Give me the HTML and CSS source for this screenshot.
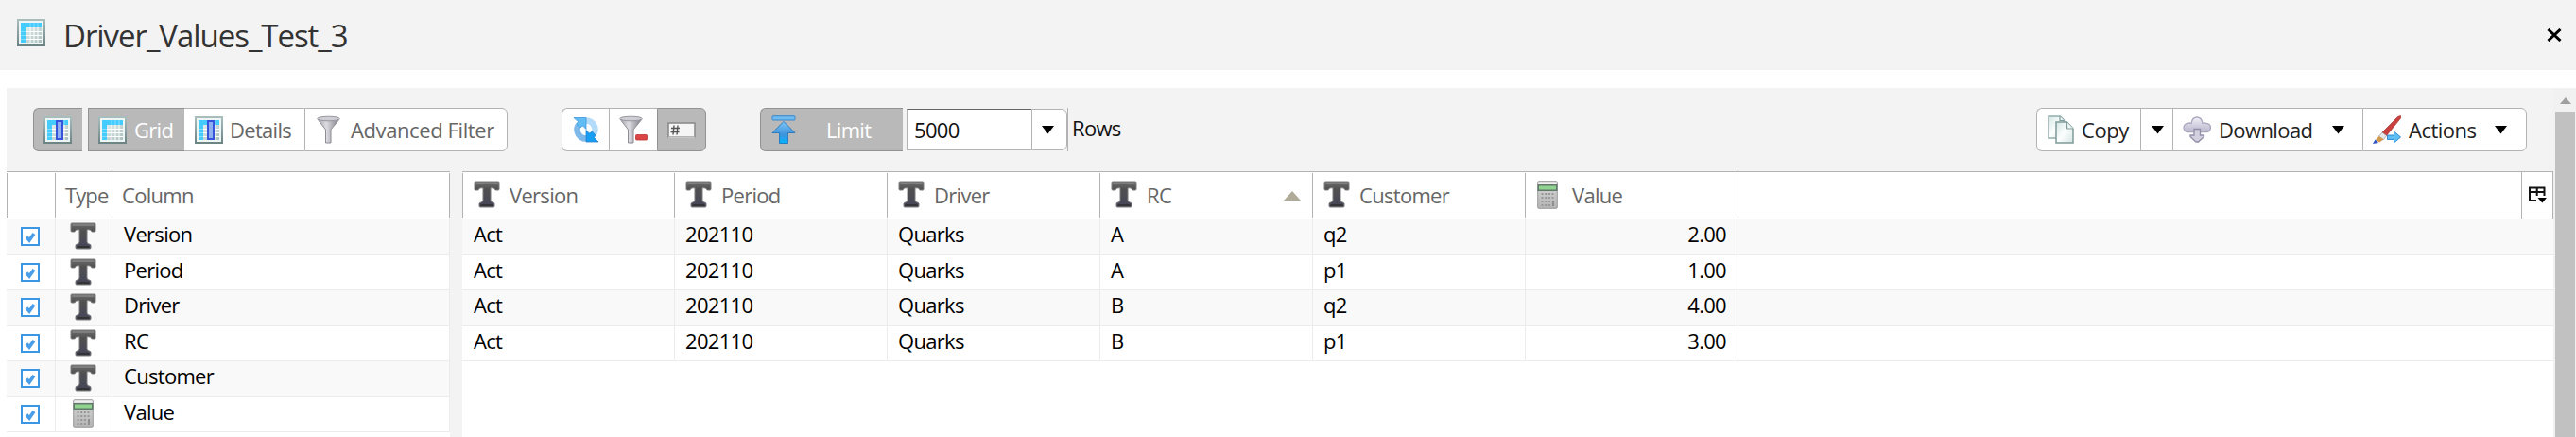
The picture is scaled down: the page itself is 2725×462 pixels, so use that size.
FILE: index.html
```html
<!DOCTYPE html>
<html lang="en">
<head>
<meta charset="utf-8">
<title>Driver_Values_Test_3</title>
<link rel="stylesheet" href="styles.css">
</head>
<body>
<svg class="defs" width="0" height="0">
  <defs>
    <linearGradient id="frame" x1="0" y1="0" x2="0" y2="1"><stop offset="0" stop-color="#a9bdbd"/><stop offset="1" stop-color="#6d8484"/></linearGradient>
    <linearGradient id="cells" x1="0" y1="0" x2="1" y2="1"><stop offset="0" stop-color="#f4fafa"/><stop offset="1" stop-color="#a9bfbe"/></linearGradient>
    <linearGradient id="tdark" x1="0" y1="0" x2="0" y2="1"><stop offset="0" stop-color="#6e6e6e"/><stop offset=".3" stop-color="#505050"/><stop offset="1" stop-color="#45455a"/></linearGradient>
    <linearGradient id="metal" x1="0" y1="0" x2="1" y2="0"><stop offset="0" stop-color="#a5a3a8"/><stop offset=".4" stop-color="#dddce3"/><stop offset="1" stop-color="#7c7a82"/></linearGradient>
    <linearGradient id="blue" x1="0" y1="0" x2="0" y2="1"><stop offset="0" stop-color="#7cc6f6"/><stop offset=".6" stop-color="#3f93dc"/><stop offset="1" stop-color="#00b4ff"/></linearGradient>
    <linearGradient id="paper" x1="0" y1="0" x2="1" y2="1"><stop offset="0" stop-color="#d3e6e4"/><stop offset=".5" stop-color="#fbfefe"/><stop offset="1" stop-color="#d5e5e3"/></linearGradient>
    <linearGradient id="cloud" x1="0" y1="0" x2="0" y2="1"><stop offset="0" stop-color="#f1f0f8"/><stop offset="1" stop-color="#b9b6cc"/></linearGradient>
    <linearGradient id="calc" x1="0" y1="0" x2="0" y2="1"><stop offset="0" stop-color="#d9d9d9"/><stop offset="1" stop-color="#b4b4b4"/></linearGradient>
    <symbol id="i-grid" viewBox="0 0 30 29">
      <rect x="1" y="1" width="28" height="27" fill="#eef6f5" stroke="url(#frame)" stroke-width="2"/>
      <rect x="4" y="4" width="22" height="21" fill="url(#cells)"/>
      <path d="M4 4h22v5H9v16H4z" fill="#45ccff"/>
      <path d="M9 13.500h17M9 17.500h17M9 21.500h17M14 9v16M18 9v16M22 9v16" stroke="#fff" stroke-width="1"/>
      <path d="M4 13.500h5M4 17.500h5M4 21.500h5M14 4v5M18 4v5M22 4v5" stroke="#8adfff" stroke-width=".9"/>
    </symbol>
    <symbol id="i-col" viewBox="0 0 30 29">
      <use href="#i-grid" width="30" height="29"/>
      <rect x="14" y="5" width="6" height="19" fill="#8fb0f0" stroke="#3653dd" stroke-width="2"/>
    </symbol>
    <symbol id="i-text" viewBox="0 0 28 29">
      <path d="M2 1h24q1 0 1 1v7q0 1-1 1h-2.500q-1 0-1-1-.5-1.500-4.500-1.300v13.300q.3 2 3 2.300 1 .2 1 1.200v2.500q0 1-1 1H7q-1 0-1-1v-2.500q0-1 1-1.200 2.700-.3 3-2.300V7.700Q6 7.500 5.500 9q0 1-1 1H2q-1 0-1-1V2q0-1 1-1z" fill="url(#tdark)" stroke="#7d7d7d" stroke-width="1"/>
      <path d="M2.500 3h23" stroke="#868686" stroke-width="1.500"/>
      <path d="M7.500 26h13" stroke="#333" stroke-width="2"/>
    </symbol>
    <symbol id="i-calc" viewBox="0 0 22 30">
      <rect x=".7" y=".7" width="20.600" height="28.600" rx="1" fill="url(#calc)" stroke="#9b9b9b"/>
      <path d="M1.500 1.500h19v2h-19z" fill="#f0f0f0"/>
      <rect x=".5" y="4" width="21" height="7" fill="#62786a"/>
      <rect x="2" y="5.500" width="18" height="4" fill="#8fd48e"/>
      <path d="M4.500 14h13M4.500 18h13M4.500 22h11M4.500 26h11" stroke="#979797" stroke-width="1.800" stroke-dasharray="2 1.700"/>
      <path d="M17 21v6" stroke="#8a8a8a" stroke-width="1.800"/>
    </symbol>
    <symbol id="i-funnel" viewBox="0 0 25 30">
      <path d="M1 4L9.500 15v14h5.500V15L24 4z" fill="url(#metal)" stroke="#8f8c94"/>
      <ellipse cx="12.500" cy="3.500" rx="11.800" ry="2.300" fill="#cfced5" stroke="#99969e"/>
    </symbol>
    <symbol id="i-down" viewBox="0 0 13 9"><path d="M0 0h13L6.500 8.500z"/></symbol>
  </defs>
</svg>

<header class="titlebar">
  <svg class="ic-grid"><use href="#i-grid"/></svg>
  <h1 class="title">Driver_Values_Test_3</h1>
  <svg class="close" viewBox="0 0 16 14"><path d="M1.500 1L14.500 13M14.500 1L1.500 13" stroke="#000" stroke-width="3"/></svg>
</header>

<main class="panel">
  <div class="work">
    <div class="toolbar">
      <div class="btn on b-cols"><svg class="ic-grid"><use href="#i-col"/></svg></div>
      <div class="group g-view">
        <div class="btn on b-grid"><svg class="ic-grid"><use href="#i-grid"/></svg><span class="t-grid">Grid</span></div>
        <div class="btn b-details"><svg class="ic-grid"><use href="#i-col"/></svg><span class="t-details">Details</span></div>
        <div class="btn b-filter"><svg class="ic-funnel"><use href="#i-funnel"/></svg><span class="t-filter">Advanced Filter</span></div>
      </div>
      <div class="group g-data">
        <div class="btn b-refresh"><svg class="ic-refresh" viewBox="0 0 28 28">
          <path d="M14 4.500A9.500 9.500 0 0 1 22 19" fill="none" stroke="#b4dbf7" stroke-width="6.500"/>
          <path d="M14 23.500A9.500 9.500 0 0 1 6 9" fill="none" stroke="#7db8ea" stroke-width="6.500"/>
          <path d="M1 1.500h13v12l-3.500-3.500-3 2-3.500-4 1.500-2.500z" fill="#62bdf4" stroke="#3d96db" stroke-width=".8"/>
          <path d="M27 27H14V14.500l3.500 3.500 3-2 3.500 4-1.500 2.500z" fill="#169ff2" stroke="#2b80cc" stroke-width=".8"/>
        </svg></div>
        <div class="btn b-clear"><svg class="ic-clear" viewBox="0 0 30 30">
          <use href="#i-funnel" width="25" height="30"/><rect x="17.500" y="20.500" width="12" height="5.500" rx="1" fill="#dc4545" stroke="#b93434" stroke-width=".8"/>
        </svg></div>
        <div class="btn on b-num"><svg class="ic-num" viewBox="0 0 30 17">
          <rect x="1" y="1" width="28" height="15" fill="#f5f5f5" stroke="#8c8c8c" stroke-width="1.600"/><path d="M1 16.200h28" stroke="#ddd"/>
          <path d="M4 6.500h9M3.500 10.500h9M7 3.500l-1 10M11 3.500l-1 10" stroke="#555" stroke-width="1.400"/>
        </svg></div>
      </div>
      <div class="btn on b-limit"><svg class="ic-limit" viewBox="0 0 26 30">
        <rect x="1" y=".7" width="24" height="4.300" rx=".8" fill="#6ebcf2" stroke="#3a87c8" stroke-width="1"/>
        <path d="M13 6.500L25 18.500H17.500V29.500H8.500V18.500H1z" fill="url(#blue)" stroke="#2c7cc0" stroke-width="1"/>
      </svg><span class="t-limit">Limit</span></div>
      <div class="combo"><div class="field"><span class="t-num">5000</span></div><div class="drop"><svg class="ic-down"><use href="#i-down"/></svg></div></div>
      <span class="rows-label">Rows</span>
      <div class="group g-right">
        <div class="btn dark b-copy"><svg class="ic-copy" viewBox="0 0 28 30">
          <path d="M1 1h12.500l4 4v19H1z" fill="url(#paper)" stroke="#93aeac" stroke-width="1.500"/>
          <path d="M9 7h11.500l6.500 7v15H9z" fill="url(#paper)" stroke="#7f9b99" stroke-width="1.500"/>
          <path d="M13 1v4.500h4.500M20.500 7v7H27" fill="#eaf5f4" stroke="#7f9b99" stroke-width="1.200"/>
        </svg><span class="t-copy">Copy</span></div>
        <div class="btn dark b-copydrop"><svg class="ic-down"><use href="#i-down"/></svg></div>
        <div class="btn dark b-download"><svg class="ic-cloud" viewBox="0 0 30 28">
          <path d="M5.500 16.500a4.500 4.500 0 0 1 0-9Q7.500 6.500 9 7.500 10 1 15 1T21 7.500q2-1.200 4 0a4.500 4.500 0 0 1 0 9z" fill="url(#cloud)" stroke="#aaa7bd" stroke-width="1.300"/>
          <path d="M12 13.500h6.500v6.500h4v1.500L16.500 27h-2.500L8 21.500V20h4z" fill="#d3d1e0" stroke="#908da6" stroke-width="1.300"/>
        </svg><span class="t-download">Download</span><svg class="ic-down"><use href="#i-down"/></svg></div>
        <div class="btn dark b-actions"><svg class="ic-brush" viewBox="0 0 30 30">
          <path d="M29.500.5V3L14.500 21.500l-4.500-3.500L26.500 1.500z" fill="#c9403e" stroke="#a8302e" stroke-width=".7"/>
          <path d="M10 18l4.500 3.500-3 4-5-3.500z" fill="#e9e9e9" stroke="#888" stroke-width=".6"/>
          <path d="M6.500 22l5 3.500-4.500 3-4-2.500z" fill="#d39a4b"/><path d="M2.500 25.500l3.500 3.500-6 1z" fill="#2c50c8"/>
          <path d="M15.500 21h7v-4L29.500 23l-7 6v-3.500h-7z" fill="#5dbdf5" stroke="#2b83c8" stroke-width=".9"/>
        </svg><span class="t-actions">Actions</span><svg class="ic-down"><use href="#i-down"/></svg></div>
      </div>
    </div>

    <div class="grids">
      <section class="columns-grid">
        <div class="head">
          <div class="hc c-check"></div><div class="hc c-type"><span class="t-type">Type</span></div><div class="hc c-name"><span class="t-column">Column</span></div>
        </div>
        <div id="columns"></div>
      </section>
      <section class="data-grid">
        <div class="head" id="data-head"></div>
        <div id="data"></div>
      </section>
    </div>
  </div>
  <div class="scrollbar"><svg class="up" viewBox="0 0 12 7"><path d="M0 7L6 0l6 7z" fill="#a0a0a0"/></svg><div class="thumb"></div></div>
</main>
<script src="grid.js"></script>
</body>
</html>
```
FILE: grid.js
```js
const cols = ['Version', 'Period', 'Driver', 'RC', 'Customer', 'Value'];
const rows = [
  ['Act', '202110', 'Quarks', 'A', 'q2', '2.00'],
  ['Act', '202110', 'Quarks', 'A', 'p1', '1.00'],
  ['Act', '202110', 'Quarks', 'B', 'q2', '4.00'],
  ['Act', '202110', 'Quarks', 'B', 'p1', '3.00']
];
const icon = c => c === 'Value'
  ? '<svg class="ic-calc"><use href="#i-calc"/></svg>'
  : '<svg class="ic-text"><use href="#i-text"/></svg>';
const check = '<svg class="check" viewBox="0 0 20 20"><rect x="1" y="1" width="18" height="18" fill="#fff" stroke="#3b97e3" stroke-width="2"/><path d="M6 10.500l3 3.500 5-7" fill="none" stroke="#4a9de8" stroke-width="3.600"/></svg>';

document.getElementById('columns').innerHTML = cols.map(c =>
  `<div class="row"><div class="cell c-check">${check}</div><div class="cell c-type">${icon(c)}</div><div class="cell c-name"><span class="txt">${c}</span></div></div>`).join('');

document.getElementById('data-head').innerHTML = cols.map(c =>
  `<div class="hc c-data"><span class="slot">${icon(c)}</span><span class="h-txt">${c}</span>${c === 'RC' ? '<svg class="sort" viewBox="0 0 18 10"><path d="M0 10L9 0l9 10z" fill="#b0ab98"/></svg>' : ''}</div>`).join('') +
  '<div class="hc c-rest"></div><div class="hc c-pick"><svg class="pick" viewBox="0 0 19 18"><path d="M8 15H1V1.500H16.500V10M1 6H16.500M8.700 1.500V10" fill="none" stroke="#111" stroke-width="2"/><path d="M9.500 12h9.500l-4.700 5.500z"/></svg></div>';

document.getElementById('data').innerHTML = rows.map(r =>
  '<div class="row">' + r.map((v, i) => `<div class="cell c-data${i === 5 ? ' num' : ''}"><span class="txt">${v}</span></div>`).join('') + '<div class="cell c-rest"></div></div>').join('');
```
FILE: styles.css
```css
* { box-sizing: border-box; }
body { margin: 0; height: 462px; overflow: hidden; background: #fff; font: 22px/30px "Open Sans", "Noto Sans", sans-serif; letter-spacing: -0.7px; color: #111; white-space: nowrap; }
svg { display: block; flex: none; }
.defs { position: absolute; }

.titlebar { height: 74px; background: #f3f3f3; display: flex; align-items: flex-start; padding: 20px 15px 0 18px; }
.title { margin: -5px 0 0 19px; font-size: 33px; line-height: 45px; font-weight: 400; letter-spacing: -1.05px; color: #333; }
.close { width: 16px; height: 14px; margin: 10px 0 0 auto; }

.panel { display: flex; margin: 19px 0 0 7px; height: 369px; background: #f3f3f3; }
.work { width: 2694px; display: flex; flex-direction: column; }
.toolbar { height: 88px; display: flex; align-items: flex-start; padding: 21px 28px 0; }

.group { display: flex; }
.btn { height: 46px; display: flex; align-items: center; background: #fff; border: 1px solid #b3b3b3; border-right-width: 0; color: #666; }
.btn span { margin-top: -1px; }
.btn.on { background: #b9b9b9; border-color: #929292; color: #fff; }
.btn.dark { color: #222; }
.group .btn:last-child { border-right-width: 1px; border-radius: 0 6px 6px 0; }
.ic-grid { width: 30px; height: 29px; }
.ic-funnel { width: 25px; height: 30px; }
.ic-down { width: 13px; height: 9px; }

.b-cols { width: 52px; padding-left: 10px; border-radius: 6px 0 0 6px; }
.g-view { margin-left: 6px; }
.b-grid { width: 102px; padding-left: 10px; gap: 8px; }
.b-details { width: 127px; padding-left: 11px; gap: 7px; border-left-width: 0; }
.b-filter { width: 215px; padding-left: 12px; gap: 11px; }
.t-filter { letter-spacing: -0.4px; }

.g-data { margin-left: 57px; }
.b-refresh { width: 50px; padding-left: 11px; border-radius: 6px 0 0 6px; }
.ic-refresh { width: 28px; height: 28px; }
.b-clear { width: 51px; padding-left: 10px; }
.ic-clear { width: 30px; height: 30px; }
.b-num { width: 52px; padding-left: 10px; }
.ic-num { width: 30px; height: 17px; }

.b-limit { width: 151px; margin-left: 57px; padding-left: 11px; gap: 32px; border-radius: 6px 0 0 6px; }
.ic-limit { width: 26px; height: 30px; }
.combo { display: flex; width: 171px; height: 46px; margin-left: 4px; padding: 1px 0; border-right: 1px solid #b3b3b3; }
.field { width: 132px; border: 1px solid #b3b3b3; border-right: 0; border-top: 1px solid #666; background: #fff; display: flex; align-items: center; padding-left: 7px; }
.drop { flex: 1; background: #fff; border: 1px solid #b3b3b3; border-radius: 0 6px 6px 0; display: flex; align-items: center; padding-left: 10px; }
.rows-label { margin: 6px 0 0 4px; }

.g-right { margin-left: auto; }
.b-copy { width: 110px; padding-left: 11px; gap: 8px; border-radius: 6px 0 0 6px; }
.t-copy { letter-spacing: -0.4px; }
.ic-copy { width: 28px; height: 30px; }
.b-copydrop { width: 34px; padding-left: 11px; }
.b-download { width: 201px; padding-left: 10px; gap: 8px; }
.ic-cloud { width: 30px; height: 28px; }
.t-download { letter-spacing: -0.6px; }
.b-download .ic-down, .b-actions .ic-down { margin: 0 20px 0 auto; }
.b-download .ic-down { margin-right: 19px; }
.b-actions { width: 174px; padding-left: 10px; gap: 8px; }
.t-actions { letter-spacing: -0.5px; }
.ic-brush { width: 30px; height: 30px; }

.grids { flex: 1; display: flex; gap: 13px; }
.columns-grid { width: 469px; background: #fff; }
.data-grid { width: 2212px; background: #fff; }
.head { height: 51px; border: solid #b3b3b3; border-width: 1px 0; display: flex; padding: 1px 0; }
.hc { border-left: 1px solid #b3b3b3; display: flex; align-items: center; color: #666; padding-bottom: 2px; }
.columns-grid .hc:last-child, .c-pick { border-right: 1px solid #b3b3b3; }
.columns-grid .c-check { width: 51px; }
.columns-grid .c-type { width: 60px; }
.columns-grid .c-name { flex: 1; }
.t-type, .t-column { padding-left: 10px; }
.t-type { letter-spacing: -0.9px; }
.row { display: flex; height: 37.5px; border-bottom: 1px solid #ececec; }
.row:nth-child(odd) { background: #f9f9f9; }
.cell { display: flex; align-items: center; border-left: 1px solid #ececec; color: #000; }
.cell:first-child { border-left-color: transparent; }
.columns-grid .cell:last-child { border-right: 1px solid #ececec; }
.cell.c-check { padding-left: 14px; }
.check { width: 20px; height: 20px; }
.cell.c-type { padding: 0 0 1px 15px; }
.cell.c-type .ic-calc { margin-left: 3px; }
.cell.c-name { padding-left: 12px; }
.txt { margin-top: -6px; }
.ic-text { width: 28px; height: 29px; }
.ic-calc { width: 22px; height: 30px; }
.hc.c-data { padding: 0 12px 2px 11px; }
.cell.c-data { padding: 0 12px 0 11px; }
.c-data { width: 225px; }
.c-data:first-child { width: 224px; }
.cell.num { justify-content: flex-end; }
.slot { width: 38px; }
.slot .ic-calc { margin-left: 1px; }
.sort { width: 18px; height: 10px; margin: 2px 0 0 auto; }
.c-rest { flex: 1; }
.c-pick { width: 34px; padding-left: 7px; margin: -1px 0; }
.pick { width: 19px; height: 18px; }

.scrollbar { width: 24px; background: #f1f1f1; padding-left: 2px; display: flex; flex-direction: column; }
.up { width: 12px; height: 7px; margin: 10px 0 8px 5px; }
.thumb { flex: 1; width: 21px; background: #c1c1c1; }
```
